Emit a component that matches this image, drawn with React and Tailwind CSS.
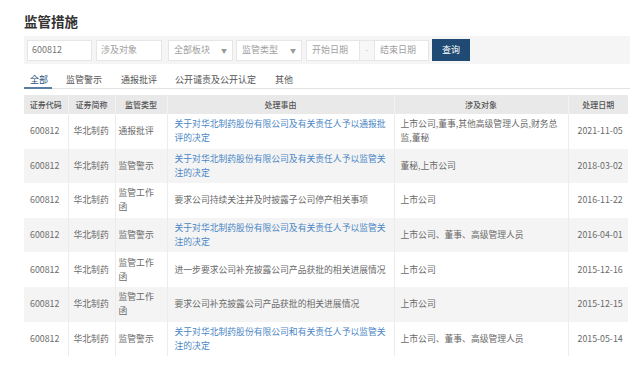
import React from "react";

const rows = [
  { type: "通报批评", reason: "关于对华北制药股份有限公司及有关责任人予以通报批评的决定", link: true, obj: "上市公司,董事,其他高级管理人员,财务总监,董秘", date: "2021-11-05" },
  { type: "监管警示", reason: "关于对华北制药股份有限公司及有关责任人予以监管关注的决定", link: true, obj: "董秘,上市公司", date: "2018-03-02" },
  { type: "监管工作函", reason: "要求公司持续关注并及时披露子公司停产相关事项", link: false, obj: "上市公司", date: "2016-11-22" },
  { type: "监管警示", reason: "关于对华北制药股份有限公司及有关责任人予以监管关注的决定", link: true, obj: "上市公司、董事、高级管理人员", date: "2016-04-01" },
  { type: "监管工作函", reason: "进一步要求公司补充披露公司产品获批的相关进展情况", link: false, obj: "上市公司", date: "2015-12-16" },
  { type: "监管工作函", reason: "要求公司补充披露公司产品获批的相关进展情况", link: false, obj: "上市公司", date: "2015-12-15" },
  { type: "监管警示", reason: "关于对华北制药股份有限公司和有关责任人予以监管关注的决定", link: true, obj: "上市公司、董事、高级管理人员", date: "2015-05-14" },
];

const font = { fontFamily: '"Noto Sans CJK SC", "Noto Sans", sans-serif' };

function Caret() {
  return <span className="text-[6px] text-[#999]">▼</span>;
}

export default function App() {
  return (
    <div className="w-[640px] h-[367px] bg-white overflow-hidden" style={font}>
      <div className="pl-[24px] pr-[10px]">
        <div className="pt-[11px] h-[36px] text-[13.5px] font-bold text-[#333] leading-[20px]">监管措施</div>
        <div className="h-[28px] bg-[#f5f5f5] flex items-center pl-[3px] text-[9px] text-[#a0a0a0]">
          <div className="w-[65px] h-[21px] bg-white border border-[#e6e6e6] flex items-center pl-[4px] text-[#777]">600812</div>
          <div className="ml-[4px] w-[66px] h-[21px] bg-white border border-[#e6e6e6] flex items-center pl-[4px]">涉及对象</div>
          <div className="ml-[6px] w-[65px] h-[21px] bg-white border border-[#e6e6e6] flex items-center justify-between px-[5px]"><span>全部板块</span><Caret /></div>
          <div className="ml-[3px] w-[66px] h-[21px] bg-white border border-[#e6e6e6] flex items-center justify-between px-[5px]"><span>监管类型</span><Caret /></div>
          <div className="ml-[4px] w-[54px] h-[21px] bg-white border border-[#e6e6e6] flex items-center pl-[5px]">开始日期</div>
          <div className="w-[14px] h-[21px] bg-[#f7f7f7] border-y border-[#e6e6e6] flex items-center justify-center text-[#ccc]">-</div>
          <div className="w-[55px] h-[21px] bg-white border border-[#e6e6e6] flex items-center pl-[5px]">结束日期</div>
          <div className="ml-[3px] w-[38px] h-[22px] bg-[#1e4a74] flex items-center justify-center text-white text-[9px]">查询</div>
        </div>
        <div className="mt-[9px] h-[16px] flex items-start border-b border-[#e3e3e3] text-[9px] text-[#555] leading-[14px]">
          <div className="w-[28px] h-[16px] pl-[6px] text-[#244f7a] border-b-2 border-[#5a7fa6]">全部</div>
          <div className="ml-[14px]">监管警示</div>
          <div className="ml-[19px]">通报批评</div>
          <div className="ml-[18px]">公开谴责及公开认定</div>
          <div className="ml-[19px]">其他</div>
        </div>
        <table className="mt-[6px] w-[604px] table-fixed border-collapse text-[8.8px] text-[#6a6a6a] leading-[14px]">
          <colgroup>
            <col className="w-[44px]" />
            <col className="w-[47px]" />
            <col className="w-[52px]" />
            <col className="w-[227px]" />
            <col className="w-[174px]" />
            <col className="w-[60px]" />
          </colgroup>
          <thead>
            <tr className="h-[19px] bg-[#e9e9e9] text-[8px] text-[#555]">
              <th className="font-medium border-r border-[#f3f3f3]">证券代码</th>
              <th className="font-medium border-r border-[#f3f3f3]">证券简称</th>
              <th className="font-medium border-r border-[#f3f3f3]">监管类型</th>
              <th className="font-medium border-r border-[#f3f3f3]">处理事由</th>
              <th className="font-medium border-r border-[#f3f3f3]">涉及对象</th>
              <th className="font-medium">处理日期</th>
            </tr>
          </thead>
          <tbody>
            {rows.map((r, i) => (
              <tr key={i} className={"h-[34.6px] " + (i % 2 === 1 ? "bg-[#f4f4f4]" : "bg-white")}>
                <td className="pl-[6px] border-r border-[#ececec] align-middle">600812</td>
                <td className="pl-[5px] border-r border-[#ececec] align-middle">华北制药</td>
                <td className="pl-[3px] pr-[6px] border-r border-[#ececec] align-middle">{r.type}</td>
                <td className={"pl-[7px] pr-[3px] border-r border-[#ececec] align-middle " + (r.link ? "text-[#4a86c5]" : "")}>{r.reason}</td>
                <td className="pl-[6px] pr-[3px] border-r border-[#ececec] align-middle">{r.obj}</td>
                <td className="pl-[9px] align-middle">{r.date}</td>
              </tr>
            ))}
          </tbody>
        </table>
      </div>
    </div>
  );
}
